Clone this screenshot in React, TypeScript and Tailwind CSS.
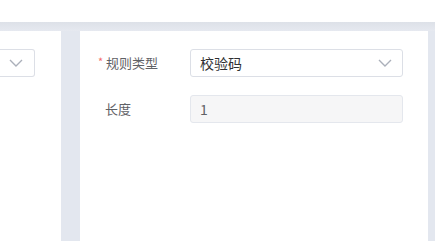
import React from "react";

const Chevron = ({ className }: { className?: string }) => (
  <svg width="14" height="8" viewBox="0 0 14 8" className={className} fill="none">
    <path d="M1 1l6 6 6-6" stroke="#abb0ba" strokeWidth="1.4" />
  </svg>
);

export default function App() {
  return (
    <div
      className="w-[435px] h-[241px] bg-white flex flex-col overflow-hidden"
      style={{ fontFamily: '"Noto Sans CJK SC", "Noto Sans", sans-serif' }}
    >
      <div className="h-[22px] bg-white" />
      <div className="flex-1 flex flex-col bg-[#e3e7ef]">
        <div className="h-[9px] bg-gradient-to-b from-[#dde1e8] to-[#e6e9f0]" />
        <div className="flex-1 flex">
          <div className="w-[61px] bg-white pt-[18px]">
            <div className="w-[35px] h-[28px] border border-[#dcdfe6] border-l-0 rounded-r-[3px] flex items-center justify-end pr-[11px]">
              <Chevron />
            </div>
          </div>
          <div className="w-[19px]" />
          <div className="w-[348px] bg-white pt-[18px] pl-[18px] text-[13px]">
            <div className="flex items-center h-[28px]">
              <div className="w-[92px] flex items-center text-[#5f6166]">
                <span className="text-[#f56c6c] text-[11px] w-[8px] leading-none mt-[-3px]">*</span>
                <span>规则类型</span>
              </div>
              <div className="w-[213px] h-[28px] border border-[#dcdfe6] rounded-[3px] flex items-center justify-between pl-[9px] pr-[10px]">
                <span className="text-[#303133] text-[14px]">校验码</span>
                <Chevron />
              </div>
            </div>
            <div className="flex items-center h-[28px] mt-[18px]">
              <div className="w-[92px] pl-[7px] text-[#5f6166]">长度</div>
              <div className="w-[213px] h-[28px] border border-[#e4e7ed] bg-[#f6f6f7] rounded-[3px] flex items-center pl-[9px] text-[#606266] text-[14px]">
                1
              </div>
            </div>
          </div>
          <div className="flex-1" />
        </div>
      </div>
    </div>
  );
}
